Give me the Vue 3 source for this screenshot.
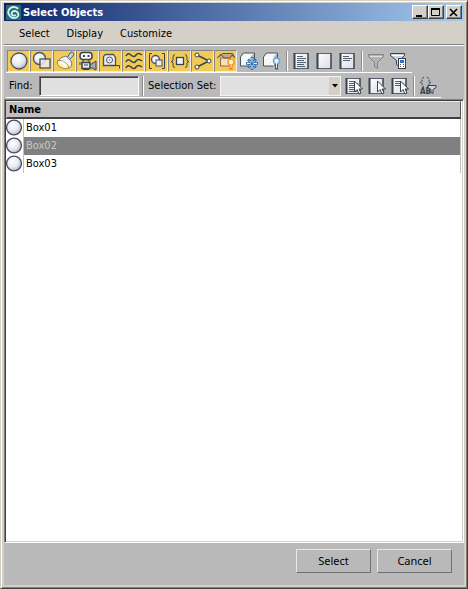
<script setup>
import { ref } from 'vue'

const find = ref('')
const selectionSet = ref('')
const selected = ref('Box02')
const objects = ['Box01', 'Box02', 'Box03']
const menus = ['Select', 'Display', 'Customize']

const dark = '#39424f'
const ball = (x, y, r) => `<circle cx="${x}" cy="${y}" r="${r}" fill="url(#pearl)" stroke="#4a505e" stroke-width="1.3"/>`
const page = (lines) =>
  `<rect x="3" y="2.500" width="14" height="15" fill="url(#paper)"/><path d="M3 2.500h14M3 17.500h14" stroke="#59616d"/><path d="M3.500 2v16" stroke="${dark}" stroke-width="2"/><path d="M17 2v16" stroke="${dark}" stroke-width="1.500"/>${lines}`
const lines = (d) => `<path d="${d}" stroke="#55606e" fill="none"/>`
const pointer = '<path d="M11.500 5v11l2.500-2.500 2 4.500 2-1-2-4h3.500z" fill="#fff" stroke="#39424f"/>'
const cube = '<path d="M1.500 6l3-4h11v8l-4 5h-10z" fill="#f6f6f7" stroke="#4b5360"/><path d="M2.500 6.500h9v8" stroke="#fff" fill="none"/><path d="M12 7v7l3-4V3z" fill="#a9aeb6"/><path d="M11.500 6.500l3-3.500" stroke="#b8bcc3"/>'
const funnel = (fill, stroke) => `<path d="M2.500 3.500h15v2l-6 6v6l-3-2v-4l-6-6z" fill="${fill}" stroke="${stroke}"/><path d="M4 5.500h12" stroke="#fff" opacity=".6"/>`

const displayFilters = [
  { name: 'Display geometry', art: ball(10, 10, 8) },
  { name: 'Display shapes', art: ball(7.5, 7.5, 6) + '<rect x="8" y="8" width="10" height="9" fill="#eceef4" fill-opacity=".8" stroke="#4a505e" stroke-width="1.300"/>' },
  { name: 'Display lights', art: '<path d="M12 7l3-5 2-1 2 2-1 2-4 4z" fill="#c9ccd3" stroke="#5a606c"/><path d="M11 5l5 5q2 5-2 7L3 10q2-4 8-5z" fill="#eef0f2" stroke="#777b80"/><path d="M2.500 9.500q4-1 8 2.500 4 3 3.500 5-5 2-9-1-4-3-2.500-6.500z" fill="#fff2b0" stroke="#9d8c52"/><path d="M5 11q4 0 6 4" stroke="#fff" stroke-width="2" fill="none"/>' },
  { name: 'Display cameras', art: `<rect x="2" y="1.500" width="12" height="7" rx="3" fill="#fff" stroke="${dark}" stroke-width="1.500"/><path d="M5 4h2v2H5zM9.500 4h2v2h-2z" fill="${dark}"/><path d="M5 9v3M11 9v3" stroke="${dark}"/><path d="M4 11.500h8v6H4z" fill="#e6e8ed" stroke="${dark}" stroke-width="1.500"/><path d="M12 14l6-4v9l-6-3z" fill="#a5abb5" stroke="${dark}"/><path d="M2 11v3M5 18.500h6M6 14h4" stroke="${dark}"/>` },
  { name: 'Display helpers', art: `<path d="M2.500 14.500v-9l2-2h8l2 3v8z" fill="#e9ebf0" stroke="#4a505e" stroke-width="1.300"/><circle cx="8.500" cy="9" r="3" fill="#fff" stroke="#4a505e"/><circle cx="8.500" cy="9" r="1" fill="#8d939e"/><path d="M9 14.500h9.500v3" fill="none" stroke="${dark}"/>` },
  { name: 'Display space warps', art: `<path d="M2 5q2-4 5-1t5 0 6 0M2 11q2-4 5-1t5 0 6 0M2 17q2-4 5-1t5 0 6 0" fill="none" stroke="${dark}" stroke-width="1.500"/>` },
  { name: 'Display groups', art: ball(8.5, 8.5, 4) + `<rect x="9" y="9" width="6" height="6" fill="#eceef4" stroke="#4a505e"/><path d="M5 2.500H2.500v15H5M15 2.500h2.500v15H15" fill="none" stroke="${dark}"/>` },
  { name: 'Display xrefs', art: `<rect x="6.500" y="6.500" width="7" height="7" fill="#f3f4f8" stroke="${dark}" stroke-width="1.300"/><path d="M5 3.500q-2 0-2 3v2q0 2-2 2 2 0 2 2v2q0 2 2 2M15 3.500q2 0 2 3v2q0 2 2 2-2 0-2 2v2q0 2-2 2" fill="none" stroke="${dark}"/>` },
  { name: 'Display bones', art: `<path d="M4 4l12 6L4 16" fill="none" stroke="${dark}" stroke-width="1.500"/><circle cx="4" cy="4" r="2" fill="#fff" stroke="${dark}"/><circle cx="16" cy="10" r="2" fill="#fff" stroke="${dark}"/><circle cx="4" cy="16" r="2" fill="#fff" stroke="${dark}"/>` },
  { name: 'Display children', art: '<path d="M4.500 7h9v8h-9z" fill="#f3dfbf" stroke="#8c6a4c"/><path d="M1.500 6.500l5-4h10l2 4" fill="#c5a887" stroke="#69513d"/><path d="M1 7l4-4 3 4h6l2-3 3 3" fill="none" stroke="#69513d"/><circle cx="15" cy="11" r="3" fill="#fff7b8" stroke="#ff9b20" stroke-width="1.500"/><path d="M15 13.500v5" stroke="#ed6c10" stroke-width="3"/><path d="M15 11v6" stroke="#fff"/>' }
]

const influences = [
  { name: 'Display frozen objects', art: cube + '<path d="M13 6v13M7 12.500h12M9 8.500l8 8M17 8.500l-8 8" stroke="#2e6eae" stroke-width="2.600"/><path d="M13 7v11M8 12.500h10M10 9.500l6 6M16 9.500l-6 6" stroke="#e6f6ff"/><circle cx="13" cy="12.500" r="1.500" fill="#2e6eae"/>' },
  { name: 'Display hidden objects', art: cube + '<circle cx="14.500" cy="10" r="3" fill="#dff2ff" stroke="#70a6d6" stroke-width="1.500"/><path d="M14.500 13v5.500" stroke="#4e5e72" stroke-width="3"/><path d="M14.500 11v6" stroke="#d9efff"/>' }
]

const fullLines = lines('M6 5.500h6M6 7.500h9M6 9.500h7M6 11.500h9M6 13.500h7M6 15.500h8')
const shortLines = lines('M6 5.500h6M6 7.500h9M6 9.500h7')
const pages = [
  { name: 'Select all', art: page(fullLines) },
  { name: 'Select none', art: page('') },
  { name: 'Invert selection', art: page(shortLines) }
]
const filters = [
  { name: 'Filter', art: funnel('#b2b2b2', '#858585') },
  { name: 'Filter settings', art: `<path d="M1.500 2.500h14v2l-5 5v6l-3-2v-4l-6-5z" fill="#cfd4df" stroke="${dark}"/><path d="M3 4.500h11" stroke="#fff"/><rect x="9.500" y="7.500" width="7" height="10" fill="#fff" stroke="${dark}"/><path d="M11 9h4v3h-4z" fill="#2675c9"/><path d="M11 13.500h1M14 13.500h1M11 15.500h1M14 15.500h1" stroke="#555"/>` }
]
const columns = [
  { name: 'Select dependents', art: page(fullLines) + pointer },
  { name: 'Select children', art: page('') + pointer },
  { name: 'Select influences', art: page(shortLines) + pointer }
]
</script>

<template>
  <main class="window">
    <svg class="defs" aria-hidden="true">
      <defs>
        <radialGradient id="pearl" cx=".4" cy=".35" r=".7">
          <stop offset="0" stop-color="#fff" /><stop offset=".55" stop-color="#e8eaf3" /><stop offset="1" stop-color="#aeb2c0" />
        </radialGradient>
        <linearGradient id="paper" x2="1" y2="1"><stop stop-color="#fff" /><stop offset="1" stop-color="#d9dde5" /></linearGradient>
      </defs>
    </svg>
    <header class="titlebar">
      <svg class="logo" viewBox="0 0 16 16" aria-hidden="true">
        <rect width="16" height="16" rx="1" fill="#286b72" />
        <path d="M13 4Q9 1 5 3q-4 3-2 7 2 4 6 4 5-1 4-5-2-4-6-2-2 2 0 4 3 1 3-1" fill="none" stroke="#d5f1ec" stroke-width="2" />
      </svg>
      <h1>Select Objects</h1>
      <div class="captions">
        <button aria-label="Minimize"><svg viewBox="0 0 12 10"><path d="M2 9h6" stroke="#000" stroke-width="2" /></svg></button>
        <button aria-label="Maximize"><svg viewBox="0 0 12 10"><path d="M1.500 1.500h8v7h-8z" fill="none" stroke="#000" /><path d="M1 2h9" stroke="#000" stroke-width="2" /></svg></button>
        <button class="close" aria-label="Close"><svg viewBox="0 0 12 10"><path d="M2 2l7 7M9 2L2 9" stroke="#000" stroke-width="1.600" /></svg></button>
      </div>
    </header>
    <nav class="menubar">
      <button v-for="menu in menus" :key="menu">{{ menu }}</button>
    </nav>

    <div class="tools">
      <div class="row first">
        <button v-for="t in displayFilters" :key="t.name" class="tool on" :aria-label="t.name"><svg viewBox="0 0 20 20" v-html="t.art" /></button>
        <button v-for="t in influences" :key="t.name" class="tool" :aria-label="t.name"><svg viewBox="0 0 20 20" v-html="t.art" /></button>
        <i class="sep" />
        <button v-for="t in pages" :key="t.name" class="tool" :aria-label="t.name"><svg viewBox="0 0 20 20" v-html="t.art" /></button>
        <i class="sep" />
        <button v-for="t in filters" :key="t.name" class="tool" :aria-label="t.name"><svg viewBox="0 0 20 20" v-html="t.art" /></button>
      </div>
      <div class="row second">
        <label class="find-label" for="find">Find:</label>
        <input id="find" v-model="find" type="text" />
        <i class="sep" />
        <label class="set-label" for="set">Selection Set:</label>
        <span class="combo">
          <select id="set" v-model="selectionSet"><option value=""></option></select>
          <span class="arrow" aria-hidden="true"><svg viewBox="0 0 6 4"><path d="M0 0h6L3 3.500z" /></svg></span>
        </span>
        <button v-for="t in columns" :key="t.name" class="tool" :aria-label="t.name"><svg viewBox="0 0 20 20" v-html="t.art" /></button>
        <i class="sep" />
        <button class="tool" aria-label="Filter by name">
          <svg viewBox="0 0 20 20">
            <path d="M6 1.500q-2 0-2 2v2q0 1-2 1 2 0 2 1v1q0 2 2 2M9 1.500q2 0 2 2v2q0 1 2 1-2 0-2 1v1q0 2-2 2" fill="none" stroke="#39424f" stroke-dasharray="2 1" />
            <text x="2" y="18" font-size="8" font-weight="bold" fill="#39424f">AB</text>
            <path d="M10 9.500h8v2l-3 2v4l-2-1v-3l-3-2z" fill="#c9d3e1" stroke="#39424f" />
          </svg>
        </button>
      </div>
    </div>

    <section class="list">
      <table>
        <thead><tr><th colspan="2">Name</th></tr></thead>
        <tbody>
          <tr v-for="name in objects" :key="name" :class="{ selected: selected === name }" @click="selected = name">
            <td class="icon"><svg viewBox="0 0 16 18" aria-hidden="true"><circle cx="8" cy="8.500" r="7.400" fill="url(#pearl)" stroke="#4a505e" stroke-width="1.300" /></svg></td>
            <td class="name">{{ name }}</td>
          </tr>
        </tbody>
      </table>
    </section>

    <footer>
      <button>Select</button>
      <button>Cancel</button>
    </footer>
  </main>
</template>

<style>
body { margin: 0; background: #404040; }
</style>

<style scoped>
* { box-sizing: border-box; }
.window {
  display: flex;
  flex-direction: column;
  min-height: 100vh;
  padding: 2px 3px 3px;
  border: 1px solid #d4d0c8;
  border-right-color: #404040;
  border-bottom-color: #404040;
  background: #d4d0c8;
  box-shadow: inset 1px 1px #fff, inset -1px -1px #808080;
  font: 11px/14px "DejaVu Sans Condensed", "DejaVu Sans", sans-serif;
  color: #000;
}
button, input, select { font: inherit; color: inherit; border-radius: 0; }
button { padding: 0; border: 0; background: none; }
.defs { position: absolute; width: 0; height: 0; }
.titlebar {
  display: flex;
  align-items: center;
  height: 18px;
  padding: 0 2px;
  background: linear-gradient(90deg, #0a246a, #a6caf0);
}
.logo { width: 15px; height: 15px; margin-right: 2px; }
h1 { flex: 1; margin: 0; padding-top: 1px; font-size: 11px; line-height: 14px; color: #fff; }
.captions { display: flex; }
.captions button {
  width: 16px;
  height: 14px;
  background: #d4d0c8;
  border: 1px solid;
  border-color: #fff #404040 #404040 #fff;
  box-shadow: inset -1px -1px #808080;
}
.captions .close { margin-left: 2px; }
.captions svg { display: block; width: 12px; height: 10px; margin-left: 1px; }
.menubar { display: flex; gap: 17px; height: 23px; padding: 0 15px; }
.menubar button { height: 26px; }
.tools { border-top: 1px solid #808080; box-shadow: inset 0 1px #fff; background: #b9b9b9; padding: 5px 2px 1px; }
.row { display: flex; align-items: center; width: fit-content; border-bottom: 1px solid #fff; }
.first { height: 23px; padding: 0 2px 0 1px; }
.second { height: 25px; padding: 3px 2px 1px 0; }
.tool { flex: none; display: grid; place-items: center; width: 23px; height: 22px; }
.tool svg { width: 20px; height: 20px; }
.on { background: #f1cb56; border: 1px solid; border-color: #858585 #eee #eee #858585; }
.sep { flex: none; width: 2px; height: 20px; margin: 0 1px 0 3px; border-left: 1px solid #8b8b8b; border-right: 1px solid #fff; }
.find-label { width: 33px; padding-left: 3px; }
#find {
  width: 100px;
  height: 20px;
  padding: 0 3px;
  background: #e0e0e0;
  border: 1px solid;
  border-color: #6b6b6b #fff #fff #6b6b6b;
  box-shadow: inset 1px 1px #404040;
  outline: 0;
}
.set-label { width: 75px; padding-left: 3px; white-space: nowrap; }
.combo { display: grid; width: 121px; height: 20px; }
.combo > * { grid-area: 1 / 1; }
select { width: 100%; appearance: none; border: 1px solid #f4f4f4; background: #e0e0e0; padding: 0 14px 0 3px; }
.arrow { justify-self: end; display: grid; place-items: center; width: 11px; margin: 1px; background: #d4d0c8; pointer-events: none; }
.arrow svg { width: 6px; height: 4px; }
.list {
  flex: 1;
  background: #fff;
  border: 1px solid;
  border-color: #808080 #fff #fff #808080;
  box-shadow: inset 1px 1px #404040, inset -1px -1px #d4d0c8;
  padding: 1px 2px 1px 1px;
}
table { width: 100%; border-collapse: separate; border-spacing: 0; }
th {
  height: 18px;
  padding: 0 2px;
  text-align: left;
  background: #c0c0c0;
  border: solid;
  border-width: 1px 1px 2px;
  border-color: #e8e8e8 #555 #404040 #c0c0c0;
}
td { height: 18px; padding: 0; }
.icon { width: 18px; background: #fff; border-right: 1px solid #c0c0c0; }
.icon svg { display: block; width: 16px; height: 18px; }
.name { padding-left: 2px; border-right: 1px solid #c0c0c0; }
.selected .name { background: #808080; color: #c8c8c0; }
footer { display: flex; justify-content: flex-end; gap: 6px; padding: 6px 12px 12px; background: #b9b9b9; }
footer button {
  width: 75px;
  height: 24px;
  border: 1px solid;
  border-color: #e8e8e8 #707070 #707070 #e8e8e8;
  font: 11px/14px "Noto Sans", sans-serif;
}
</style>
